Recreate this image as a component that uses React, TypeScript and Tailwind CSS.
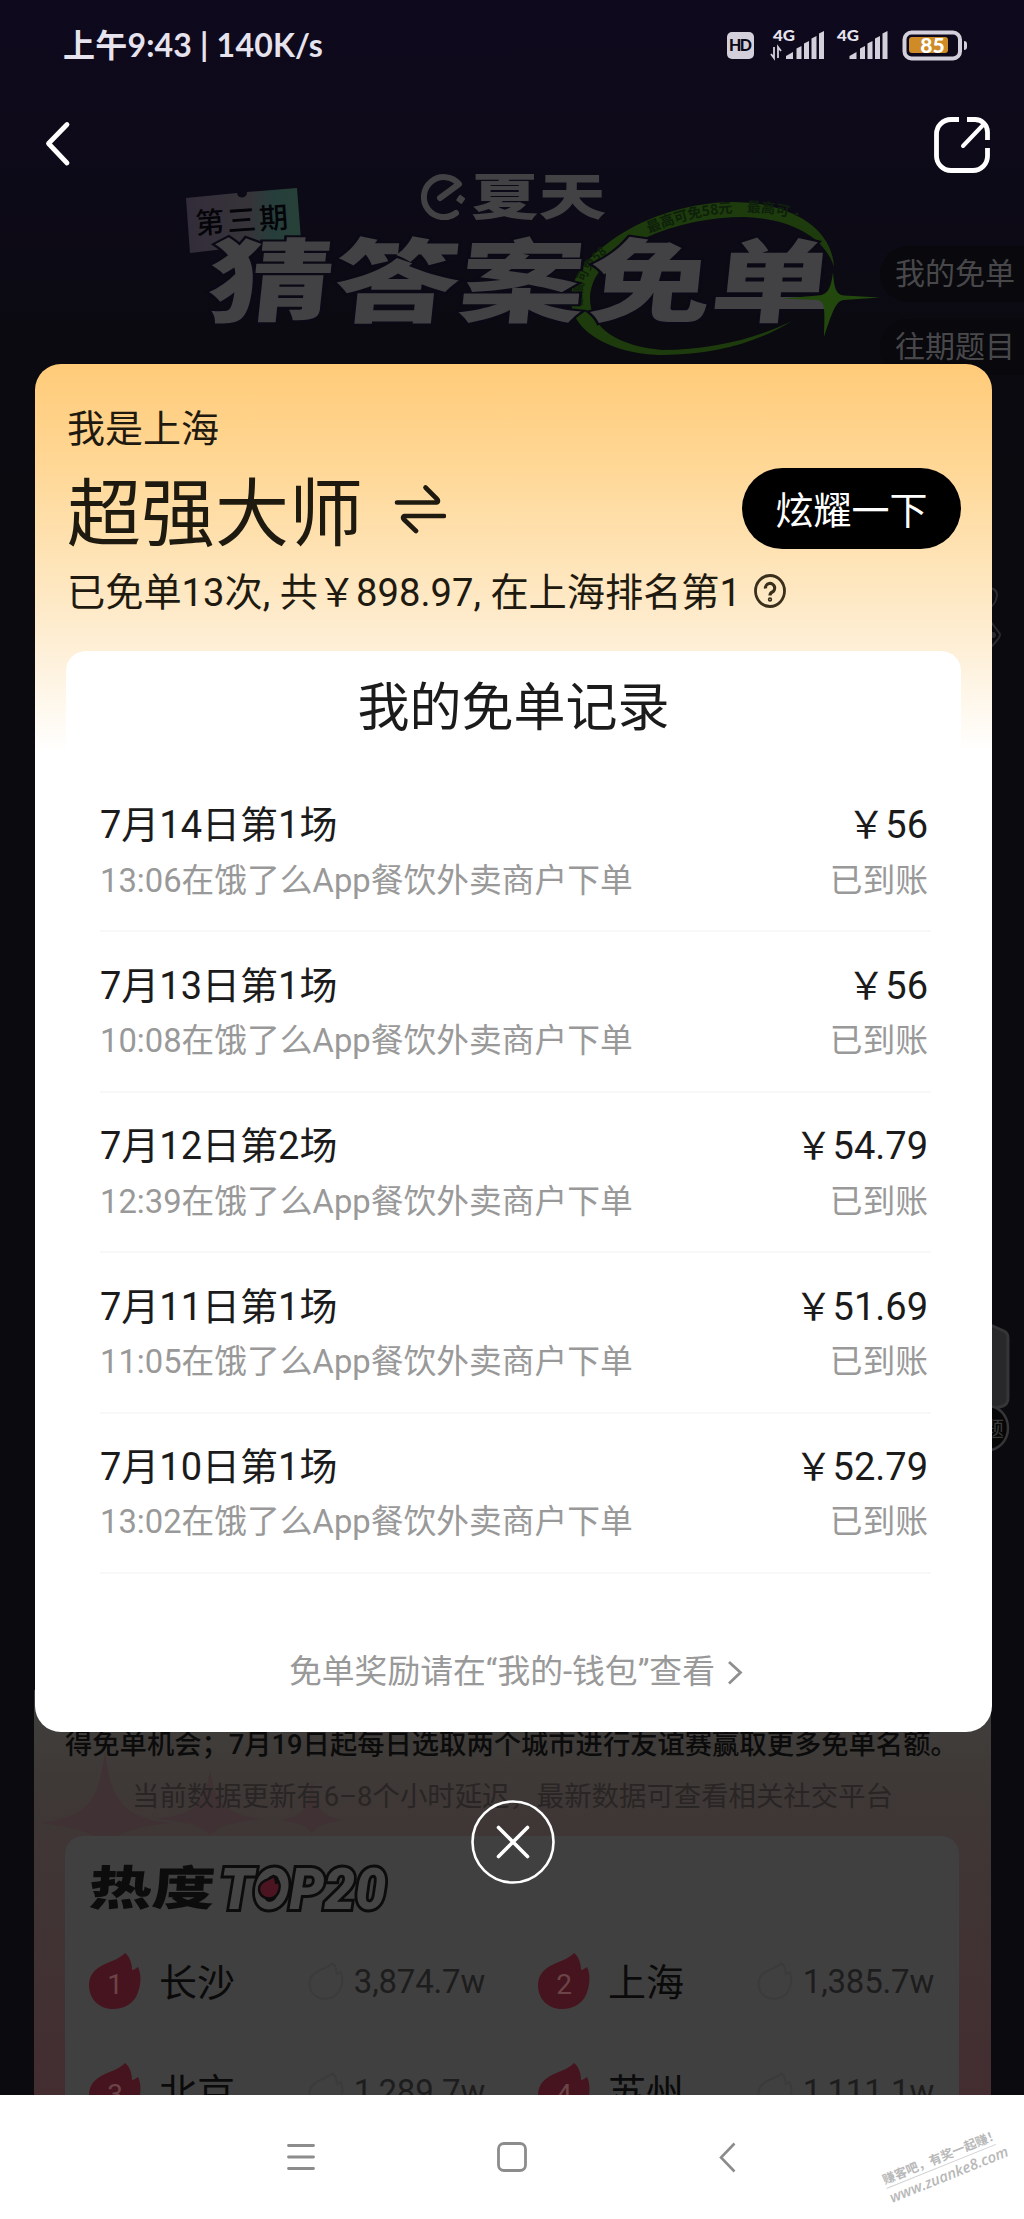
import type { ReactNode } from 'react';

interface FreeOrder {
  title: string;
  time: string;
  amount: string;
}

const orders: FreeOrder[] = [
  { title: '7月14日第1场', time: '13:06', amount: '56' },
  { title: '7月13日第1场', time: '10:08', amount: '56' },
  { title: '7月12日第2场', time: '12:39', amount: '54.79' },
  { title: '7月11日第1场', time: '11:05', amount: '51.69' },
  { title: '7月10日第1场', time: '13:02', amount: '52.79' },
];

const cities = [
  { rank: 1, name: '长沙', heat: '3,874.7w' },
  { rank: 2, name: '上海', heat: '1,385.7w' },
  { rank: 3, name: '北京', heat: '1,289.7w' },
  { rank: 4, name: '苏州', heat: '1,111.1w' },
];

const FLAME =
  'M36 0C40 3 43 9 43 17C45 17 47 15 49 14C53 22 52 34 47 44C42 52 34 56 24 56C10 56 0 46 0 32C0 20 8 15 16 11C26 7 31 5 36 0Z';

function SignalBars({ x }: { x: number }) {
  return (
    <g fill="#d3d0db">
      <path d={`M${x} 33V30L${x + 7} 26V33Z`} />
      <path d={`M${x + 10.5} 33V22.500l5 -2.500V33Z`} />
      <path d={`M${x + 18} 33V17.500l5 -2.500V33Z`} />
      <path d={`M${x + 25.500} 33V12.500l5 -2.500V33Z`} />
      <path d={`M${x + 33} 33V7.500l5 -2.500V33Z`} />
    </g>
  );
}

function StatusBar() {
  return (
    <div className="flex h-[90px] items-center justify-between pl-[63px] pr-[56px] text-[#e6e3ee]">
      <div className="whitespace-nowrap font-[Lato,'Noto_Sans_CJK_SC',sans-serif] text-[32px] font-bold leading-none tracking-[0.2px]">
        上午9:43 | 140K/s
      </div>
      <svg width="248" height="40" viewBox="0 0 248 40" className="mt-[2px] font-[Lato,sans-serif]">
        <rect x="7" y="6" width="27" height="27" rx="5" fill="#d3d0db" />
        <text x="20.500" y="25" fontSize="16" fontWeight="900" fill="#0c0a18" textAnchor="middle" textLength="23">
          HD
        </text>
        <text x="53" y="15" fontSize="15" fontWeight="900" fill="#e6e3ee" textLength="22" lengthAdjust="spacingAndGlyphs">
          4G
        </text>
        <path d="M51 28l3 4V21M58 32V21l3 4" stroke="#d3d0db" strokeWidth="1.800" fill="none" />
        <SignalBars x={66} />
        <text x="117" y="15" fontSize="15" fontWeight="900" fill="#e6e3ee" textLength="22" lengthAdjust="spacingAndGlyphs">
          4G
        </text>
        <SignalBars x={129.500} />
        <rect x="184.500" y="6.500" width="55.500" height="26" rx="7" stroke="#d3d0db" strokeWidth="4" fill="none" />
        <path d="M244 15a3 3 0 0 1 3 3v3a3 3 0 0 1-3 3z" fill="#d3d0db" />
        <rect x="189" y="11" width="39" height="16" rx="3" fill="#cf8c26" />
        <text x="212.500" y="27" fontSize="21" fontWeight="900" fill="#fff" textAnchor="middle">
          85
        </text>
      </svg>
    </div>
  );
}

function TopNav() {
  return (
    <div className="flex h-[84px] items-end justify-between pl-[44px] pr-[33px]">
      <svg width="27" height="46" viewBox="0 0 27 46" className="mb-[7px]" fill="none">
        <path d="M23 3.500L4.500 22.500L23 42" stroke="#fff" strokeWidth="4.800" strokeLinecap="round" strokeLinejoin="round" />
      </svg>
      <svg width="58" height="58" viewBox="0 0 58 58" fill="none" stroke="#fff" strokeWidth="4.800" strokeLinecap="butt">
        <path d="M26 3.500H18A14.500 14.500 0 0 0 3.500 18V40A14.500 14.500 0 0 0 18 54.500H40A14.500 14.500 0 0 0 54.500 40V32" />
        <path d="M34 3.500H42A12.500 12.500 0 0 1 54.500 16V24" />
        <path d="M30 30L51 8" strokeLinecap="round" strokeWidth="4" />
      </svg>
    </div>
  );
}

// Title artwork of the campaign page, already darkened by the scrim
function Banner() {
  return (
    <svg
      width="880"
      height="190"
      viewBox="0 174 880 190"
      className="overflow-visible font-['Noto_Sans_CJK_SC',sans-serif]"
    >
      <defs>
        <linearGradient id="ticket" x1="0" x2="1" y1="0" y2="0">
          <stop offset="0" stopColor="#322c3a" />
          <stop offset="0.550" stopColor="#373439" />
          <stop offset="0.750" stopColor="#263e3b" />
          <stop offset="1" stopColor="#274138" />
        </linearGradient>
      </defs>
      <path d="M186 198L237 193A5 5 0 0 0 247 192L297 188L301 240L190 253Z" fill="url(#ticket)" />
      <text x="196" y="234" fontSize="29" fontWeight="500" fill="#050408" textLength="93" transform="rotate(-4 196 235)">
        第三期
      </text>

      <path d="M440 198L459 184A20 20 0 1 0 456 213" fill="none" stroke="#424143" strokeWidth="6" strokeLinejoin="round" strokeLinecap="round" />
      <rect x="457.500" y="196" width="7" height="7" rx="1" fill="#424143" transform="rotate(35 461 199)" />
      <text x="471" y="215" fontSize="50" fontWeight="900" fill="#424143" textLength="135" lengthAdjust="spacingAndGlyphs">
        夏天
      </text>

      <path
        d="M834 267C832 226 788 202 732 202C682 203 640 220 612 240C586 259 570 276 571 302C574 338 624 355 662 355C716 355 758 342 792 321C757 338 712 350 662 350C620 346 590 330 590 298C591 266 624 248 645 238C676 224 710 217 745 217C790 219 824 236 834 267Z"
        fill="#1d3b0c"
      />
      <path id="ringTop" d="M649 233C686 217 720 212 750 212C778 212 800 218 822 234" fill="none" />
      <path id="ringLeft" d="M583 306C578 282 592 262 616 246" fill="none" />
      <text fontSize="14" fontWeight="700" fill="#0e200b">
        <textPath href="#ringTop">最高可免58元　最高可·</textPath>
      </text>
      <text fontSize="12" fontWeight="700" fill="#0e200b">
        <textPath href="#ringLeft">最高可免58</textPath>
      </text>

      <g fontSize="91" fontWeight="900" fill="#424143" stroke="#0b0915" strokeWidth="4" paintOrder="stroke" transform="translate(0 315) skewX(-6)">
        <text x="205" y="0" textLength="377" lengthAdjust="spacingAndGlyphs">
          猜答案
        </text>
        <text x="586" y="0" textLength="245" lengthAdjust="spacingAndGlyphs">
          免单
        </text>
      </g>
      <path
        d="M833 272C834 288 836 295 844 295.500L880 297.500L844 300C837 301 834 306 824 337C825 308 825 301 817 300L782 298.500L818 295.500C828 295 831 288 833 272Z"
        fill="#23480e"
      />
    </svg>
  );
}

function SideTab({ children }: { children: ReactNode }) {
  return (
    <div className="flex h-[56px] shrink-0 items-center whitespace-nowrap rounded-l-full bg-[#09080d] pl-[15px] text-[30px] leading-none text-[#48484b]">
      {children}
    </div>
  );
}

function Sparkle({ className }: { className: string }) {
  return (
    <svg viewBox="0 0 100 100" preserveAspectRatio="none" className={className}>
      <path d="M50 0C55 50 62 68 100 74C62 80 56 88 50 100C44 88 38 80 0 74C38 68 45 50 50 0Z" fill="#403234" />
    </svg>
  );
}

function CityItem({ rank, name, heat }: { rank: number; name: string; heat: string }) {
  return (
    <div className="flex h-[56px] items-center">
      <div className="relative h-[56px] w-[52px]">
        <svg viewBox="0 0 52 56" className="h-full w-full">
          <path d={FLAME} fill="#46141e" />
        </svg>
        <span className="absolute inset-0 flex items-center justify-center pt-[7px] text-[28px] leading-none text-[#6b4449]">
          {rank}
        </span>
      </div>
      <span className="ml-[18px] pt-[4px] text-[38px] leading-none text-[#0a0a0a]">{name}</span>
      <svg width="36" height="38" viewBox="-2 -2 56 60" className="ml-auto mr-[10px]">
        <path d={FLAME} fill="none" stroke="#3b3b3b" strokeWidth="3" />
      </svg>
      <span className="pt-[1px] text-[33px] leading-none tracking-[-0.2px] text-[#1d1d1d]">{heat}</span>
    </div>
  );
}

function HeatPanel() {
  return (
    <div className="relative mx-[34px] h-[405px] w-[957px] overflow-hidden bg-linear-to-b from-[#40403e] via-[#3e3836] via-25% to-[#432d31]">
      <Sparkle className="absolute left-[6px] top-[62px] h-[96px] w-[130px]" />
      <Sparkle className="absolute left-[122px] top-[80px] h-[66px] w-[108px]" />
      <Sparkle className="absolute left-[246px] top-[90px] h-[54px] w-[64px]" />
      <div className="relative flex h-full flex-col">
        <p className="mt-[41px] whitespace-nowrap pl-[31px] text-[27.3px] font-medium leading-[28px] text-[#0b0b0b]">
          得免单机会；7月19日起每日选取两个城市进行友谊赛赢取更多免单名额。
        </p>
        <p className="mt-[24px] whitespace-nowrap pl-[98px] text-[27.4px] leading-[28px] text-[#292525]">
          当前数据更新有6–8个小时延迟，最新数据可查看相关社交平台
        </p>
        <div className="ml-[31px] mt-[25px] w-[894px] flex-1 rounded-t-[18px] bg-[#404040] pl-[24px] pr-[25px] pt-[25px]">
          <svg width="304" height="56" viewBox="0 0 304 56" className="block overflow-visible">
            <g transform="skewX(-4)">
              <text x="2" y="44" fontSize="47" fontWeight="900" fill="#0c0c0c" textLength="126" lengthAdjust="spacingAndGlyphs" className="font-['Noto_Sans_CJK_SC',sans-serif]">
                热度
              </text>
            </g>
            <text
              x="131"
              y="48"
              fontSize="58"
              fontWeight="900"
              fontStyle="italic"
              fill="#454545"
              stroke="#0c0c0c"
              strokeWidth="6"
              paintOrder="stroke"
              textLength="166"
              lengthAdjust="spacingAndGlyphs"
              className="font-[Roboto,sans-serif]"
            >
              TOP20
            </text>
            <path d={FLAME} transform="translate(170 15) scale(0.4)" fill="#4a1520" stroke="#0c0c0c" strokeWidth="6" />
          </svg>
          <div className="mt-[36px] grid grid-cols-2 gap-x-[53px] gap-y-[54px]">
            {cities.map((city) => (
              <CityItem key={city.rank} {...city} />
            ))}
          </div>
        </div>
      </div>
    </div>
  );
}

function OrderRow({ title, time, amount }: FreeOrder) {
  return (
    <li className="flex h-[160.4px] flex-col justify-end border-b-2 border-[#f8f8f8] pb-[30.5px]">
      <div className="flex justify-between text-[38px] leading-[40px] text-[#1b1b1b]">
        <span>{title}</span>
        <span>￥{amount}</span>
      </div>
      <div className="mt-[16.5px] flex justify-between text-[32.75px] leading-[38px] text-[#999]">
        <span>{time}在饿了么App餐饮外卖商户下单</span>
        <span>已到账</span>
      </div>
    </li>
  );
}

function RecordDialog() {
  return (
    <section className="flex h-[1368px] w-[957px] flex-col rounded-[26px] bg-white bg-[linear-gradient(180deg,#ffcb79_0px,#ffd795_100px,#fee4b8_200px,#fef0d9_290px,#ffffff_388px)] px-[31px] text-[#1f1a10]">
      <p className="mt-[45px] pl-[1px] text-[38px] leading-[40px]">我是上海</p>
      <div className="mt-[19px] flex h-[81px] items-center justify-between">
        <div className="flex items-center">
          <h1 className="w-[301px] whitespace-nowrap pl-[1px] pt-[11px] text-[74px] leading-[81px]">超强大师</h1>
          <svg width="52" height="50" viewBox="0 0 52 50" fill="none" stroke="#1f1a10" strokeWidth="4.600" strokeLinecap="round" strokeLinejoin="round" className="ml-[27px]">
            <path d="M3 18.500H43Q45 17 43 15L31.500 3.500" />
            <path d="M50 32H10Q8 33.500 10 35.500L22 47" />
          </svg>
        </div>
        <button className="h-[81px] w-[219px] rounded-full bg-black pt-[5px] text-[38px] leading-none text-white">炫耀一下</button>
      </div>
      <div className="mt-[22px] flex h-[42px] items-center">
        <p className="whitespace-nowrap pl-[1px] pt-[2px] text-[38.2px] leading-[42px]">已免单13次, 共￥898.97, 在上海排名第1</p>
        <svg width="34" height="36" viewBox="0 0 34 36" fill="none" stroke="#3a2f1c" strokeWidth="2.800" className="ml-[12px]">
          <ellipse cx="17" cy="17" rx="14.500" ry="15.500" />
          <path d="M12.500 14.500A4.600 4.600 0 1 1 19 18.200Q17 19.200 17 21.500" strokeWidth="3.200" />
          <circle cx="17" cy="25.500" r="0.800" />
        </svg>
      </div>
      <div className="mt-[38px] flex-1 rounded-t-[20px] bg-white px-[33px]">
        <h2 className="pt-[28px] text-center text-[52px] leading-[60px] text-[#1b1b1b]">我的免单记录</h2>
        <ul className="-mr-[3px] ml-[1px] mt-[33px] [&_span:last-child]:mr-[3px]">
          {orders.map((order) => (
            <OrderRow key={order.title} {...order} />
          ))}
        </ul>
        <div className="mt-[78px] flex items-center justify-center pl-[5px] text-[32.8px] leading-[40px] text-[#999]">
          <span>免单奖励请在“我的-钱包”查看</span>
          <svg width="16" height="26" viewBox="0 0 16 26" fill="none" className="ml-[12px] mt-[2px]">
            <path d="M2 2L13.500 12.500L2 23.500" stroke="#8f8f8f" strokeWidth="2.800" />
          </svg>
        </div>
      </div>
    </section>
  );
}

function SystemNav() {
  return (
    <div className="relative flex h-[124px] items-center bg-white pl-[287px]">
      <svg width="28" height="28" viewBox="0 0 28 28" stroke="#8c8c8c" strokeWidth="2.800" strokeLinecap="round">
        <path d="M1.500 2.500H26.500M1.500 14H26.500M1.500 25.500H26.500" />
      </svg>
      <svg width="30" height="30" viewBox="0 0 30 30" fill="none" className="ml-[182px]">
        <rect x="1.500" y="1.500" width="27" height="27" rx="5.500" stroke="#8c8c8c" strokeWidth="2.800" />
      </svg>
      <svg width="17" height="31" viewBox="0 0 17 31" fill="none" className="ml-[192px]">
        <path d="M15.500 1.500L2 15.500L15.500 29.500" stroke="#8c8c8c" strokeWidth="2.600" />
      </svg>
      <div className="absolute left-[882px] top-[52px] w-[118px] -rotate-[22deg] text-[#b8b8b8]">
        <div className="whitespace-nowrap border-b border-[#d2d2d2] font-['Noto_Sans_CJK_SC',sans-serif] text-[12.5px] font-bold leading-[19px]">
          赚客吧，有奖一起赚！
        </div>
        <div className="whitespace-nowrap font-['Open_Sans',sans-serif] text-[14.8px] font-semibold italic leading-[18px]">
          www.zuanke8.com
        </div>
      </div>
    </div>
  );
}

export default function App() {
  return (
    <div className="flex h-[2219px] w-[1024px] flex-col overflow-hidden font-[Roboto,'Noto_Sans_CJK_SC',sans-serif]">
      <div className="relative flex h-[2095px] flex-col overflow-hidden bg-[#0b0a0f] bg-[linear-gradient(180deg,#0e091d_0px,#0d0a18_180px,#0b0a10_340px,#0b0a0f_500px)]">
        <StatusBar />
        <TopNav />
        <div className="flex h-[190px]">
          <Banner />
          <div className="flex w-[144px] shrink-0 flex-col gap-[17px] pt-[72px]">
            <SideTab>我的免单</SideTab>
            <SideTab>往期题目</SideTab>
          </div>
        </div>
        <div className="flex-1" />
        <HeatPanel />

        {/* floating widgets peeking out at the right edge */}
        <svg width="34" height="66" viewBox="0 0 34 66" fill="none" stroke="#2c2c2e" strokeWidth="2" className="absolute left-[980px] top-[585px]">
          <path d="M11 3Q17 5 17 10Q16 18 11 22M11 37L20 49Q21 52 11 62" />
          <circle cx="13" cy="50" r="3" fill="#2c2c2e" stroke="none" />
        </svg>
        <svg width="34" height="136" viewBox="0 0 34 136" className="absolute left-[980px] top-[1320px]">
          <path d="M8 4L24 11Q28 13 28 18V78Q28 84 23 86L8 90Z" fill="#282729" stroke="#353537" strokeWidth="3" />
          <ellipse cx="8" cy="108" rx="20" ry="22" fill="#060606" stroke="#353537" strokeWidth="2.500" />
          <text x="3" y="116" fontSize="21" fill="#3a3a3a">
            题
          </text>
        </svg>

        <div className="absolute inset-0 flex flex-col pl-[35px] pt-[364px]">
          <RecordDialog />
          <svg width="86" height="86" viewBox="0 0 86 86" fill="none" stroke="#fff" className="ml-[435px] mt-[67px]">
            <circle cx="43" cy="43" r="40.500" strokeWidth="2.600" />
            <path d="M28.500 28.500L57.500 57.500M57.500 28.500L28.500 57.500" strokeWidth="3.600" strokeLinecap="round" />
          </svg>
        </div>
      </div>
      <SystemNav />
    </div>
  );
}
